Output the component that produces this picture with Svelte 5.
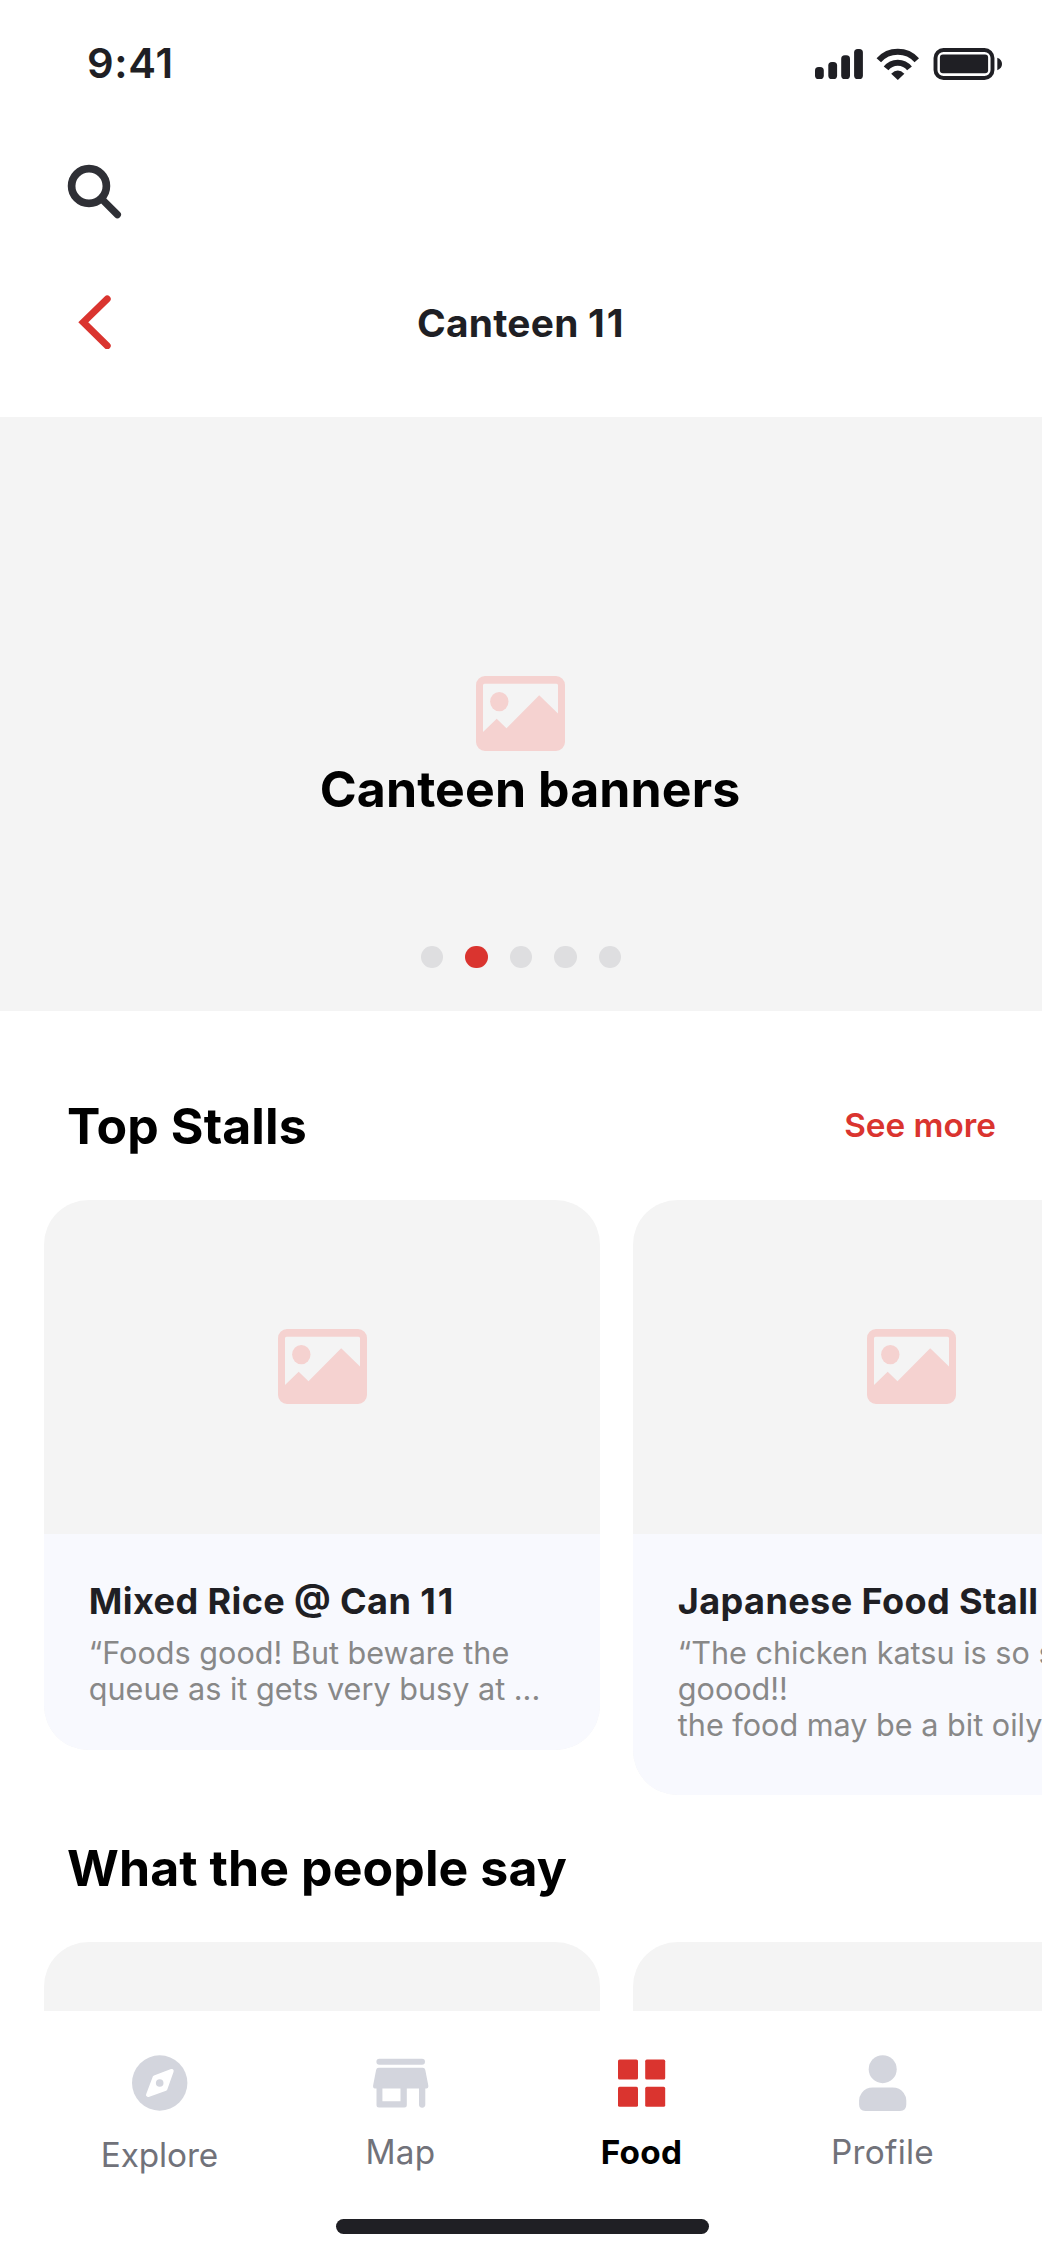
<script>
  const slides = [0, 1, 2, 3, 4];
  const activeSlide = 1;

  const stalls = [
    {
      name: 'Mixed Rice @ Can ',
      number: '11',
      lines: ['“Foods good! But beware the', 'queue as it gets very busy at ...'],
      tall: false
    },
    {
      name: 'Japanese Food Stall',
      number: '',
      lines: ['“The chicken katsu is so so', 'goood!!', 'the food may be a bit oily'],
      tall: true
    }
  ];

  const tabs = [
    { id: 'explore', label: 'Explore' },
    { id: 'map', label: 'Map' },
    { id: 'food', label: 'Food' },
    { id: 'profile', label: 'Profile' }
  ];
  const activeTab = 'food';
</script>

{#snippet picture()}
  <svg class="picture" viewBox="0 0 89 75" aria-hidden="true">
    <path
      fill-rule="evenodd"
      d="M9 0H80A9 9 0 0 1 89 9V66A9 9 0 0 1 80 75H9A9 9 0 0 1 0 66V9A9 9 0 0 1 9 0ZM8.5 7.7Q7 7.7 7 9.2V56L20.7 42.7L30.5 52.2L63.2 19.3L82 37.5V9.2Q82 7.7 80.5 7.7Z"
    />
    <ellipse cx="23.3" cy="25.6" rx="9.2" ry="9.6" />
  </svg>
{/snippet}

<div class="screen">
  <div class="status">
    <span class="time">9:41</span>
    <div class="indicators">
      <svg width="48" height="32" viewBox="0 0 48 32">
        <rect x="0" y="19" width="8.8" height="12" rx="3.6" />
        <rect x="13.3" y="14" width="8.8" height="17" rx="3.6" />
        <rect x="26.2" y="7.3" width="8.8" height="23.7" rx="3.6" />
        <rect x="39.1" y="1" width="8.8" height="30" rx="3.6" />
      </svg>
      <svg width="44" height="32" viewBox="0 0 44 32">
        <g fill="none" stroke="#1f1f24" stroke-width="6">
          <path d="M2.8 12.3A25.6 25.6 0 0 1 40.8 12.3" />
          <path d="M10.1 20.4A14.8 14.8 0 0 1 33.5 20.4" />
        </g>
        <path d="M15.2 25.7Q21.8 19.3 28.4 25.7L21.8 32Z" />
      </svg>
      <svg width="69" height="32" viewBox="0 0 69 32">
        <rect x="2.5" y="2" width="57" height="28" rx="8" fill="none" stroke="#1f1f24" stroke-width="3.9" />
        <rect x="6.9" y="6.4" width="48.2" height="18.8" rx="3" />
        <path d="M64.3 9.8Q69 11.7 69 16T64.3 22.2Z" />
      </svg>
    </div>
  </div>

  <div class="search">
    <svg width="56" height="56" viewBox="0 0 56 56" fill="none" stroke="#2f3036">
      <circle cx="22" cy="22" r="17.4" stroke-width="7.7" />
      <path d="M34.5 34.8L50.4 50.6" stroke-width="7.2" stroke-linecap="round" />
    </svg>
  </div>

  <header class="topbar">
    <svg width="34" height="54" viewBox="0 0 34 54" fill="none" stroke="#da342f" stroke-width="7">
      <path d="M29.2 3.9L5.3 27.3L29.2 50.7" stroke-linecap="round" />
    </svg>
    <h1>Canteen <span class="number">11</span></h1>
  </header>

  <section class="banner">
    {@render picture()}
    <p>Canteen banners</p>
    <div class="dots">
      {#each slides as slide}
        <i class:active={slide === activeSlide}></i>
      {/each}
    </div>
  </section>

  <div class="heading">
    <h2>Top Stalls</h2>
    <span class="more">See more</span>
  </div>
  <div class="cards stalls">
    {#each stalls as stall}
      <article class="card" class:tall={stall.tall}>
        <div class="media">{@render picture()}</div>
        <div class="body">
          <h3>{stall.name}<span class="number">{stall.number}</span></h3>
          {#each stall.lines as line}
            <p>{line}</p>
          {/each}
        </div>
      </article>
    {/each}
  </div>

  <div class="heading second">
    <h2>What the people say</h2>
  </div>
  <div class="cards reviews">
    <article class="card"></article>
    <article class="card"></article>
  </div>

  <nav>
    <div class="tabs">
      {#each tabs as tab}
        <div class="tab {tab.id}" class:active={tab.id === activeTab}>
          <svg width="66" height="66" viewBox="0.3 0 66 66">
            {#if tab.id === 'explore'}
              <circle cx="33" cy="33" r="27.7" />
              <path
                d="M45 21L28 27.3L21.3 45L38.7 38.8Z"
                fill="#fff"
                stroke="#fff"
                stroke-width="4"
                stroke-linejoin="round"
              />
              <circle cx="33" cy="33" r="3.8" />
            {:else if tab.id === 'map'}
              <rect x="8.7" y="8.7" width="48.6" height="6" rx="3" />
              <path
                fill-rule="evenodd"
                d="M11 17.8H55Q57.2 17.8 57.6 20L60.6 35.5V36.8Q60.6 38.6 58.8 38.6H57.6V54.6A3 3 0 0 1 51.3 54.6V38.6H39.1V54.9Q39.1 57.4 36.6 57.4H11.3Q8.8 57.4 8.8 54.9V38.6H7.2Q5.4 38.6 5.4 36.8V35.5L8.4 20Q8.8 17.8 11 17.8ZM14.7 38.6V51.2H32.8V38.6Z"
              />
            {:else if tab.id === 'food'}
              <rect x="9.3" y="9.6" width="20" height="20" rx="1.6" />
              <rect x="36.5" y="9.6" width="20" height="20" rx="1.6" />
              <rect x="9.3" y="36.8" width="20" height="20" rx="1.6" />
              <rect x="36.5" y="36.8" width="20" height="20" rx="1.6" />
            {:else}
              <circle cx="33" cy="19.2" r="14" />
              <path
                d="M23.3 37.6H42.7Q50 37.6 54 43Q56.6 46.5 56.6 50.5V54.5Q56.6 60.9 50.4 60.9H15.6Q9.4 60.9 9.4 54.5V50.5Q9.4 46.5 12 43Q16 37.6 23.3 37.6Z"
              />
            {/if}
          </svg>
          <span>{tab.label}</span>
        </div>
      {/each}
    </div>
    <div class="home"></div>
  </nav>
</div>

<style>
  :global(body) {
    margin: 0;
    background: #fff;
  }
  .screen {
    width: 1042px;
    height: 2256px;
    display: flex;
    flex-direction: column;
    overflow: hidden;
    background: #fff;
    color: #1f1f24;
    font-family: Inter, 'Liberation Sans', sans-serif;
  }
  .screen > * {
    flex-shrink: 0;
    box-sizing: border-box;
  }
  h1,
  h2,
  h3,
  p {
    margin: 0;
    white-space: nowrap;
  }
  svg {
    display: block;
    flex-shrink: 0;
  }
  .number {
    letter-spacing: 2px;
    margin-right: -2px;
  }

  .status {
    height: 122px;
    padding: 38px 40px 0 87px;
    display: flex;
    justify-content: space-between;
    align-items: flex-start;
  }
  .time {
    font-size: 41.7px;
    line-height: 50px;
    font-weight: 600;
    letter-spacing: 0.7px;
  }
  .indicators {
    display: flex;
    gap: 13px;
    padding-top: 10px;
    fill: #1f1f24;
  }

  .search {
    height: 134px;
    padding: 42px 0 0 67px;
  }

  .topbar {
    height: 161px;
    padding: 39px 78px 0;
    display: grid;
    grid-template-columns: 34px 1fr 34px;
    align-items: start;
  }
  h1 {
    padding: 4px 1.5px 0 0;
    text-align: center;
    font-size: 38.9px;
    line-height: 48px;
    font-weight: 700;
    letter-spacing: 0.25px;
  }

  .banner {
    height: 594px;
    padding-top: 259px;
    display: flex;
    flex-direction: column;
    align-items: center;
    background: #f4f4f4;
  }
  .picture {
    width: 89px;
    height: 75px;
    fill: #f5d2d0;
  }
  .banner .picture {
    margin-right: 1px;
  }
  .media .picture {
    margin-left: 1px;
  }
  .banner p {
    padding: 7.5px 0 0 18px;
    font-size: 50px;
    line-height: 60px;
    font-weight: 700;
    letter-spacing: 0.12px;
    color: #000;
  }
  .dots {
    display: flex;
    gap: 22.2px;
    margin-top: 127.5px;
  }
  .dots i {
    width: 22.3px;
    height: 22.3px;
    border-radius: 50%;
    background: #dedee0;
  }
  .dots i.active {
    background: #da342f;
  }

  .heading {
    height: 189px;
    padding: 85px 46px 0 67px;
    display: flex;
    justify-content: space-between;
    align-items: flex-start;
  }
  h2 {
    font-size: 50px;
    line-height: 60px;
    font-weight: 700;
    letter-spacing: 0.08px;
    color: #000;
  }
  .more {
    margin-top: 9px;
    font-size: 33.3px;
    line-height: 40px;
    font-weight: 600;
    color: #da342f;
  }
  .heading.second {
    height: 147px;
    padding-top: 43px;
  }

  .cards {
    display: flex;
    align-items: flex-start;
    gap: 33px;
    padding-left: 44px;
  }
  .stalls {
    height: 595px;
  }
  .reviews {
    height: 69px;
    overflow: hidden;
  }
  .card {
    flex: none;
    width: 556px;
    height: 550px;
    border-radius: 44.5px;
    overflow: hidden;
    background: #f4f4f4;
  }
  .card.tall {
    height: 594.7px;
  }
  .media {
    height: 333.5px;
    display: flex;
    align-items: center;
    justify-content: center;
  }
  .body {
    box-sizing: border-box;
    height: 100%;
    padding: 45.5px 44.8px 0;
    background: #f8f9fe;
  }
  h3 {
    margin-bottom: 11.5px;
    font-size: 36.1px;
    line-height: 44px;
    font-weight: 700;
    letter-spacing: 0.38px;
    font-feature-settings: 'case';
  }
  .body p {
    font-size: 30.6px;
    line-height: 36.1px;
    color: #888;
  }

  nav {
    height: 245px;
    padding-top: 39px;
    background: #fff;
  }
  .tabs {
    height: 169px;
    padding: 0 39px;
    display: grid;
    grid-template-columns: repeat(4, 1fr);
  }
  .tab {
    display: flex;
    flex-direction: column;
    align-items: center;
    fill: #d3d5dd;
    font-size: 33.3px;
    line-height: 40px;
    letter-spacing: 0.3px;
    color: #71727a;
  }
  .tab span {
    margin-top: 16px;
  }
  .tab.explore span {
    margin-top: 19px;
    letter-spacing: -0.1px;
  }
  .tab.active {
    fill: #da342f;
    color: #000;
    font-weight: 700;
  }
  .home {
    width: 373px;
    height: 15px;
    margin: 0 0 0 336px;
    border-radius: 8px;
    background: #1f1f24;
  }
</style>
